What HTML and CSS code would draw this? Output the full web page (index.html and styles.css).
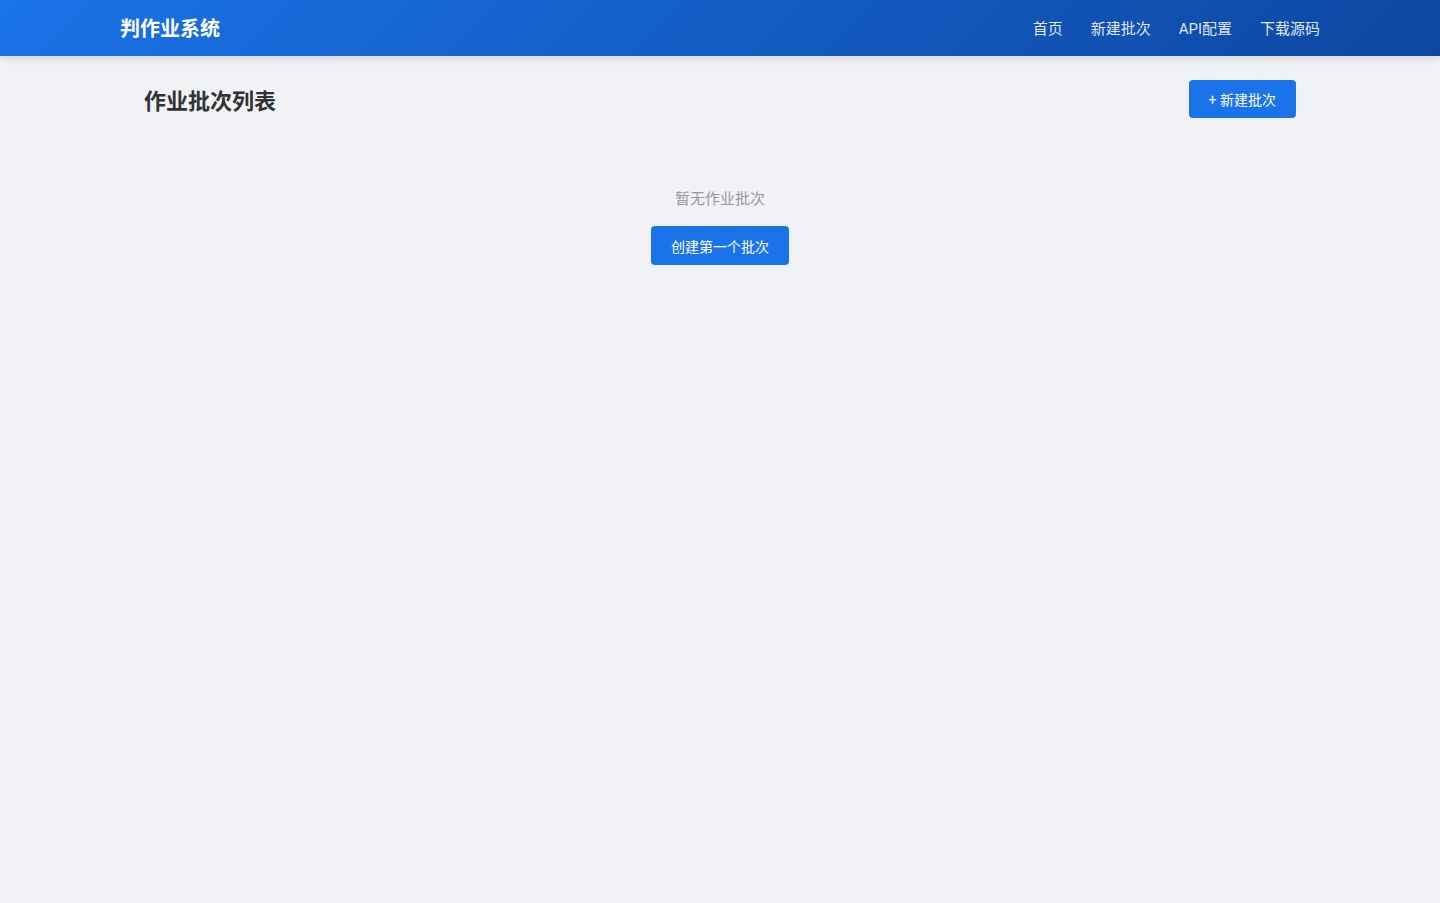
FILE: index.html
```html
<!DOCTYPE html>
<html lang="zh-CN">
<head>
<meta charset="UTF-8">
<title>判作业系统</title>
<link rel="stylesheet" href="styles.css">
</head>
<body>
<header class="topbar">
  <div class="topbar-inner">
    <div class="brand">判作业系统</div>
    <nav class="nav">
      <a href="#">首页</a>
      <a href="#">新建批次</a>
      <a href="#">API配置</a>
      <a href="#">下载源码</a>
    </nav>
  </div>
</header>
<main class="main">
  <div class="page-head">
    <h1 class="page-title">作业批次列表</h1>
    <button class="btn">+ 新建批次</button>
  </div>
  <div class="empty">
    <p class="empty-text">暂无作业批次</p>
    <button class="btn">创建第一个批次</button>
  </div>
</main>
</body>
</html>
```

FILE: styles.css
```css
* { box-sizing: border-box; }
html, body {
  margin: 0;
  padding: 0;
  background: #f0f2f5;
  font-family: Roboto, "Noto Sans CJK SC", "Noto Sans", sans-serif;
  color: #333;
}
.topbar {
  height: 56px;
  background: linear-gradient(135deg, #1a73e8 0%, #0d47a1 100%);
  box-shadow: 0 2px 8px rgba(0, 0, 0, 0.15);
}
.topbar-inner {
  max-width: 1200px;
  height: 56px;
  margin: 0 auto;
  padding-bottom: 2px;
  display: flex;
  align-items: center;
  justify-content: space-between;
}
.brand {
  color: #fff;
  font-size: 20px;
  font-weight: 700;
}
.nav {
  display: flex;
  gap: 28px;
}
.nav a {
  color: rgba(255, 255, 255, 0.88);
  text-decoration: none;
  font-size: 15px;
}
.main {
  max-width: 1200px;
  margin: 0 auto;
  padding: 24px;
}
.page-head {
  display: flex;
  align-items: center;
  justify-content: space-between;
}
.page-title {
  margin: 0;
  font-size: 22px;
  font-weight: 700;
  color: #333;
}
.btn {
  background: #1a73e8;
  color: #fff;
  border: none;
  border-radius: 4px;
  padding: 0 20px;
  height: 38px;
  font-family: inherit;
  font-size: 14px;
  cursor: pointer;
}
.empty {
  display: flex;
  flex-direction: column;
  align-items: center;
  padding-top: 69px;
}
.empty-text {
  margin: 0 0 15px;
  font-size: 15px;
  line-height: 24px;
  color: #999;
}
.empty .btn {
  height: 39px;
}
```
